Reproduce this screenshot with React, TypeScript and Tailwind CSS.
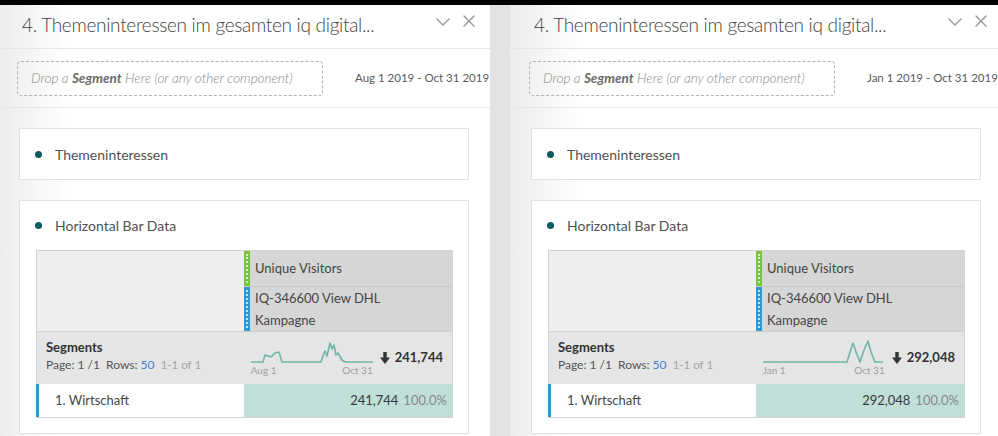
import React from "react";
import { ChevronDown, X } from "lucide-react";

type PanelProps = {
  date: string;
  value: string;
  start: string;
  points: string;
  className?: string;
};

const leftSpark =
  "0,22 12,22 14,15 17,16 20,17 24,13 28,12 31,22 70,22 72,16 74,11 76,16 79,3 81,9 83,5 85,15 87,13 91,20 94,22 122,22";
const rightSpark =
  "0,22 84,22 87,12 90,3 93,12 97,22 101,10 105,1 108,12 112,22 120,22";

function DragBar({ color }: { color: string }) {
  return (
    <div className={`w-[6px] shrink-0 flex justify-center py-[3px] ${color}`}>
      <div className="h-full border-l-2 border-dotted border-white/70" />
    </div>
  );
}

function DownArrow() {
  return (
    <svg width="10" height="12" viewBox="0 0 10 12" className="shrink-0">
      <rect x="3.3" y="0" width="3.4" height="6" fill="#333" />
      <polygon points="0,5.5 10,5.5 5,12" fill="#333" />
    </svg>
  );
}

function Panel({ date, value, start, points, className = "" }: PanelProps) {
  return (
    <div
      className={`w-[492px] shrink-0 flex flex-col bg-[linear-gradient(to_right,#ececec,#ffffff_70px)] ${className}`}
    >
      {/* Title bar */}
      <div className="h-[44px] shrink-0 flex items-start border-b border-[#e6e6e6] pl-[24px] pr-[11px]">
        <div className="mt-[8px] flex-1 text-[19px] font-light tracking-[-0.3px] leading-[24px] text-[#444] whitespace-nowrap">
          4. Themeninteressen im gesamten iq digital...
        </div>
        <ChevronDown size={24} strokeWidth={1.4} className="mt-[5px] text-[#9a9a9a]" />
        <X size={20} strokeWidth={1.7} className="mt-[6px] ml-[4px] text-[#9a9a9a]" />
      </div>

      {/* Segment drop zone + date range */}
      <div className="h-[59px] shrink-0 flex items-center border-b border-[#e6e6e6] pl-[19px] overflow-hidden">
        <div className="w-[306px] h-[35px] shrink-0 flex items-center rounded-[4px] border border-dashed border-[#b3b3b3] pl-[13px] text-[13.5px] italic font-light text-[#888] whitespace-nowrap">
          Drop a&nbsp;<span className="font-bold text-[#6a6a6a]">Segment</span>&nbsp;Here (or any other component)
        </div>
        <div className="ml-[32px] text-[11.5px] text-[#5a5a5a] whitespace-nowrap">{date}</div>
      </div>

      {/* Panel body */}
      <div className="flex-1 pt-[20px] pl-[21px]">
        <div className="w-[450px] h-[52px] bg-white border border-[#e2e2e2] flex items-center pl-[15px]">
          <span className="w-[7px] h-[7px] rounded-full bg-[#0f5b63]" />
          <span className="ml-[13px] text-[14px] text-[#505050]">Themeninteressen</span>
        </div>

        <div className="mt-[20px] w-[450px] h-[234px] bg-white border border-[#e2e2e2] pl-[16px]">
          <div className="h-[49px] flex items-center -ml-px">
            <span className="w-[7px] h-[7px] rounded-full bg-[#0f5b63]" />
            <span className="ml-[13px] text-[14px] text-[#505050]">Horizontal Bar Data</span>
          </div>

          <div className="w-[417px] border border-[#d2d2d2]">
            {/* Header */}
            <div className="flex">
              <div className="w-[207px] shrink-0 bg-[#eeeeee]" />
              <div className="flex-1 flex flex-col bg-[#d6d6d6] text-[13px] text-[#454545]">
                <div className="h-[36px] flex border-b border-[#c8c8c8]">
                  <DragBar color="bg-[#7cc242]" />
                  <div className="pl-[5px] flex items-center">Unique Visitors</div>
                </div>
                <div className="h-[44px] flex">
                  <DragBar color="bg-[#2d9ad8]" />
                  <div className="pl-[5px] leading-[22px]">
                    IQ-346600 View DHL
                    <br />
                    Kampagne
                  </div>
                </div>
              </div>
            </div>

            {/* Summary row */}
            <div className="h-[53px] flex border-t border-[#d0d0d0] bg-[#e5e5e5]">
              <div className="w-[207px] shrink-0 pl-[9px] pt-[6px]">
                <div className="text-[13px] leading-[18px] font-bold text-[#333]">Segments</div>
                <div className="text-[12px] leading-[18px] text-[#555] whitespace-nowrap">
                  Page: 1 /1&nbsp; Rows: <span className="text-[#3b7fd0]">50</span>&nbsp;{" "}
                  <span className="text-[11.5px] text-[#a5a5a5]">1-1 of 1</span>
                </div>
              </div>
              <div className="flex-1 flex items-center justify-end pr-[9px]">
                <div className="flex flex-col">
                  <svg width="122" height="24" viewBox="0 0 122 24">
                    <polyline
                      points={points}
                      fill="none"
                      stroke="#6db7a6"
                      strokeWidth="1.6"
                      strokeLinejoin="round"
                    />
                  </svg>
                  <div className="flex justify-between text-[10px] leading-[12px] text-[#a0a0a0]">
                    <span>{start}</span>
                    <span>Oct 31</span>
                  </div>
                </div>
                <div className="ml-[7px] flex items-center">
                  <DownArrow />
                  <span className="ml-[5px] text-[13px] font-bold text-[#333]">{value}</span>
                </div>
              </div>
            </div>

            {/* Data row */}
            <div className="h-[33px] flex">
              <div className="w-[208px] -ml-px shrink-0 bg-white border-l-[3px] border-[#2c98d6] pl-[16px] flex items-center text-[13px] text-[#454545]">
                1. Wirtschaft
              </div>
              <div className="flex-1 bg-[#bfdfd8] flex items-center justify-end pr-[5px] text-[13px]">
                <span className="text-[#3a3a3a]">{value}</span>
                <span className="ml-[5px] text-[#888]">100.0%</span>
              </div>
            </div>
          </div>
        </div>
      </div>
    </div>
  );
}

export default function App() {
  return (
    <div className="w-[998px] h-[436px] overflow-hidden bg-black flex flex-col font-[family-name:Lato,'Noto_Sans',sans-serif]">
      <div className="h-[5px] shrink-0 bg-black" />
      <div className="flex-1 flex overflow-hidden">
        <Panel
          className="-ml-[2px]"
          date="Aug 1 2019 - Oct 31 2019"
          value="241,744"
          start="Aug 1"
          points={leftSpark}
        />
        <div className="w-[20px] shrink-0 bg-[#e3e3e3]" />
        <Panel
          date="Jan 1 2019 - Oct 31 2019"
          value="292,048"
          start="Jan 1"
          points={rightSpark}
        />
      </div>
    </div>
  );
}
